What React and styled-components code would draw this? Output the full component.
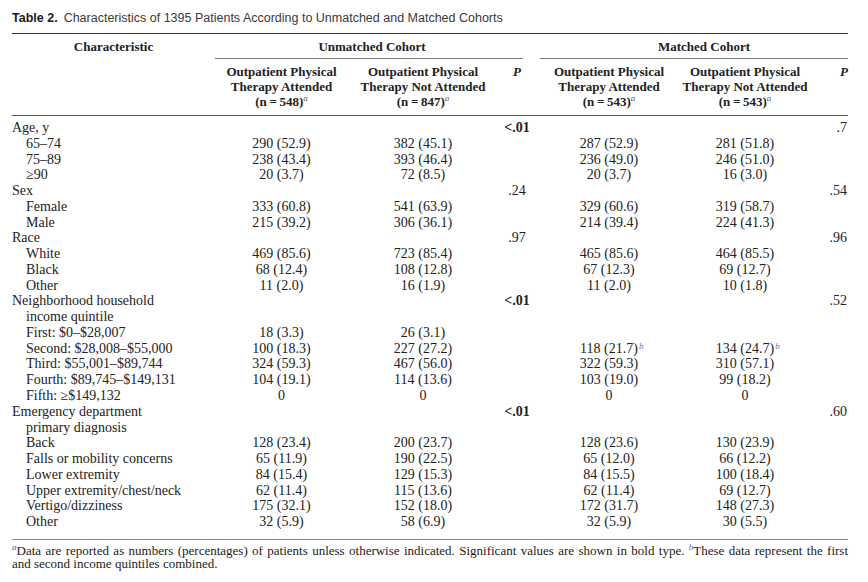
import React from "react";
import styled, { createGlobalStyle } from "styled-components";

const Global = createGlobalStyle`
  html, body { margin: 0; padding: 0; background: #fff; }
  body { font-family: "Liberation Serif", "Times New Roman", serif; color: #222; }
`;

const Page = styled.div`
  padding: 0 12px;
  width: 836px;
`;

const Title = styled.div`
  font-family: "Liberation Sans", Arial, sans-serif;
  font-size: 12.5px;
  line-height: 16px;
  padding-top: 10px;
  margin-bottom: 7px;
  color: #3a3a3a;
  white-space: nowrap;
`;

const TitleLabel = styled.span`
  font-weight: bold;
  color: #1a1a1a;
  margin-right: 6px;
`;

const Table = styled.table`
  width: 836px;
  border-collapse: collapse;
  table-layout: fixed;
  border-top: 1px solid #333;
  font-size: 14px;
`;

const HeadCell = styled.th`
  font-weight: bold;
  font-size: 13px;
  line-height: 15px;
  color: #222;
  padding: ${(p) => p.$pad || "0"};
  text-align: ${(p) => p.$align || "center"};
  vertical-align: ${(p) => p.$valign || "top"};
`;

const GroupTitle = styled.div`
  padding: 5px 0 4px ${(p) => p.$shift || 0}px;
  margin-right: ${(p) => p.$trim || 0}px;
  border-bottom: 1px solid #7a7a7a;
`;

const HeadRow = styled.tr`
  border-bottom: ${(p) => (p.$rule ? "1px solid #555" : "none")};
`;

const PMark = styled.i`
  font-weight: bold;
`;

const Sup = styled.sup`
  font-style: italic;
  font-weight: normal;
  font-size: 9px;
  line-height: 0;
  color: ${(p) => (p.$blue ? "#6a78a8" : "#5a5a6a")};
  vertical-align: 5px;
`;

const Row = styled.tr`
  & > td {
    padding-top: ${(p) => (p.$first ? "4px" : "0")};
    padding-bottom: ${(p) => (p.$last ? "9px" : "0")};
  }
`;

const Body = styled.tbody`
  border-bottom: 1px solid #888;
`;

const LabelCell = styled.td`
  line-height: 15.76px;
  padding-left: ${(p) => p.$level * 14}px !important;
  white-space: nowrap;
`;

const NumCell = styled.td`
  line-height: 15.76px;
  text-align: ${(p) => p.$align || "center"};
  font-weight: ${(p) => (p.$bold ? "bold" : "normal")};
  white-space: nowrap;
`;

const NumWrap = styled.span`
  position: relative;
`;

const FloatSup = styled(Sup)`
  position: absolute;
  left: 100%;
  top: 5px;
  margin-left: 1px;
`;

const Notes = styled.div`
  padding-top: 4px;
  font-size: 13px;
  line-height: 13.5px;
  color: #222;
`;

const NoteLine = styled.div`
  text-align: ${(p) => (p.$justify ? "justify" : "left")};
  text-align-last: ${(p) => (p.$justify ? "justify" : "auto")};
`;

const rows = [
  { label: "Age, y", level: 0, p1: "<.01", p1b: true, p2: ".7" },
  { label: "65–74", level: 1, v: ["290 (52.9)", "382 (45.1)", "287 (52.9)", "281 (51.8)"] },
  { label: "75–89", level: 1, v: ["238 (43.4)", "393 (46.4)", "236 (49.0)", "246 (51.0)"] },
  { label: "≥90", level: 1, v: ["20 (3.7)", "72 (8.5)", "20 (3.7)", "16 (3.0)"] },
  { label: "Sex", level: 0, p1: ".24", p2: ".54" },
  { label: "Female", level: 1, v: ["333 (60.8)", "541 (63.9)", "329 (60.6)", "319 (58.7)"] },
  { label: "Male", level: 1, v: ["215 (39.2)", "306 (36.1)", "214 (39.4)", "224 (41.3)"] },
  { label: "Race", level: 0, p1: ".97", p2: ".96" },
  { label: "White", level: 1, v: ["469 (85.6)", "723 (85.4)", "465 (85.6)", "464 (85.5)"] },
  { label: "Black", level: 1, v: ["68 (12.4)", "108 (12.8)", "67 (12.3)", "69 (12.7)"] },
  { label: "Other", level: 1, v: ["11 (2.0)", "16 (1.9)", "11 (2.0)", "10 (1.8)"] },
  { label: "Neighborhood household", level: 0, p1: "<.01", p1b: true, p2: ".52" },
  { label: "income quintile", level: 1 },
  { label: "First: $0–$28,007", level: 1, v: ["18 (3.3)", "26 (3.1)", "", ""] },
  { label: "Second: $28,008–$55,000", level: 1, v: ["100 (18.3)", "227 (27.2)", "118 (21.7)", "134 (24.7)"], supb: true },
  { label: "Third: $55,001–$89,744", level: 1, v: ["324 (59.3)", "467 (56.0)", "322 (59.3)", "310 (57.1)"] },
  { label: "Fourth: $89,745–$149,131", level: 1, v: ["104 (19.1)", "114 (13.6)", "103 (19.0)", "99 (18.2)"] },
  { label: "Fifth: ≥$149,132", level: 1, v: ["0", "0", "0", "0"] },
  { label: "Emergency department", level: 0, p1: "<.01", p1b: true, p2: ".60" },
  { label: "primary diagnosis", level: 1 },
  { label: "Back", level: 1, v: ["128 (23.4)", "200 (23.7)", "128 (23.6)", "130 (23.9)"] },
  { label: "Falls or mobility concerns", level: 1, v: ["65 (11.9)", "190 (22.5)", "65 (12.0)", "66 (12.2)"] },
  { label: "Lower extremity", level: 1, v: ["84 (15.4)", "129 (15.3)", "84 (15.5)", "100 (18.4)"] },
  { label: "Upper extremity/chest/neck", level: 1, v: ["62 (11.4)", "115 (13.6)", "62 (11.4)", "69 (12.7)"] },
  { label: "Vertigo/dizziness", level: 1, v: ["175 (32.1)", "152 (18.0)", "172 (31.7)", "148 (27.3)"] },
  { label: "Other", level: 1, v: ["32 (5.9)", "58 (6.9)", "32 (5.9)", "30 (5.5)"] },
];

function Value({ text, sup }) {
  return (
    <NumWrap>
      {text}
      {sup && <FloatSup $blue>b</FloatSup>}
    </NumWrap>
  );
}

function ArmHeader({ label, n }) {
  return (
    <>
      Outpatient Physical
      <br />
      Therapy {label}
      <br />
      (n{"\u2009"}={"\u2009"}{n})<Sup>a</Sup>
    </>
  );
}

export default function App() {
  return (
    <Page>
      <Global />
      <Title>
        <TitleLabel>Table 2.</TitleLabel>
        Characteristics of 1395 Patients According to Unmatched and Matched Cohorts
      </Title>
      <Table>
        <colgroup>
          <col style={{ width: 203 }} />
          <col style={{ width: 133 }} />
          <col style={{ width: 150 }} />
          <col style={{ width: 38 }} />
          <col style={{ width: 4 }} />
          <col style={{ width: 138 }} />
          <col style={{ width: 134 }} />
          <col style={{ width: 36 }} />
        </colgroup>
        <thead>
          <HeadRow>
            <HeadCell rowSpan={2} $pad="5px 0 0 0">
              Characteristic
            </HeadCell>
            <HeadCell colSpan={3}>
              <GroupTitle $shift={6} $trim={13}>Unmatched Cohort</GroupTitle>
            </HeadCell>
            <HeadCell />
            <HeadCell colSpan={3}>
              <GroupTitle $shift={20}>Matched Cohort</GroupTitle>
            </HeadCell>
          </HeadRow>
          <HeadRow $rule>
            <HeadCell $pad="5px 0 6px 0">
              <ArmHeader label="Attended" n="548" />
            </HeadCell>
            <HeadCell $pad="5px 0 6px 0">
              <ArmHeader label="Not Attended" n="847" />
            </HeadCell>
            <HeadCell $pad="5px 0 6px 0">
              <PMark>P</PMark>
            </HeadCell>
            <HeadCell />
            <HeadCell $pad="5px 0 6px 0">
              <ArmHeader label="Attended" n="543" />
            </HeadCell>
            <HeadCell $pad="5px 0 6px 0">
              <ArmHeader label="Not Attended" n="543" />
            </HeadCell>
            <HeadCell $pad="5px 0 6px 0" $align="right">
              <PMark>P</PMark>
            </HeadCell>
          </HeadRow>
        </thead>
        <Body>
          {rows.map((r, i) => {
            const v = r.v || ["", "", "", ""];
            return (
              <Row key={i} $first={i === 0} $last={i === rows.length - 1}>
                <LabelCell $level={r.level}>{r.label}</LabelCell>
                <NumCell>{v[0]}</NumCell>
                <NumCell>{v[1]}</NumCell>
                <NumCell $bold={r.p1b}>{r.p1 || ""}</NumCell>
                <NumCell />
                <NumCell>
                  <Value text={v[2]} sup={r.supb} />
                </NumCell>
                <NumCell>
                  <Value text={v[3]} sup={r.supb} />
                </NumCell>
                <NumCell $align="right">{r.p2 || ""}</NumCell>
              </Row>
            );
          })}
        </Body>
      </Table>
      <Notes>
        <NoteLine $justify>
          <Sup>a</Sup>Data are reported as numbers (percentages) of patients unless otherwise
          indicated. Significant values are shown in bold type. <Sup $blue>b</Sup>These data
          represent the first
        </NoteLine>
        <NoteLine>and second income quintiles combined.</NoteLine>
      </Notes>
    </Page>
  );
}
